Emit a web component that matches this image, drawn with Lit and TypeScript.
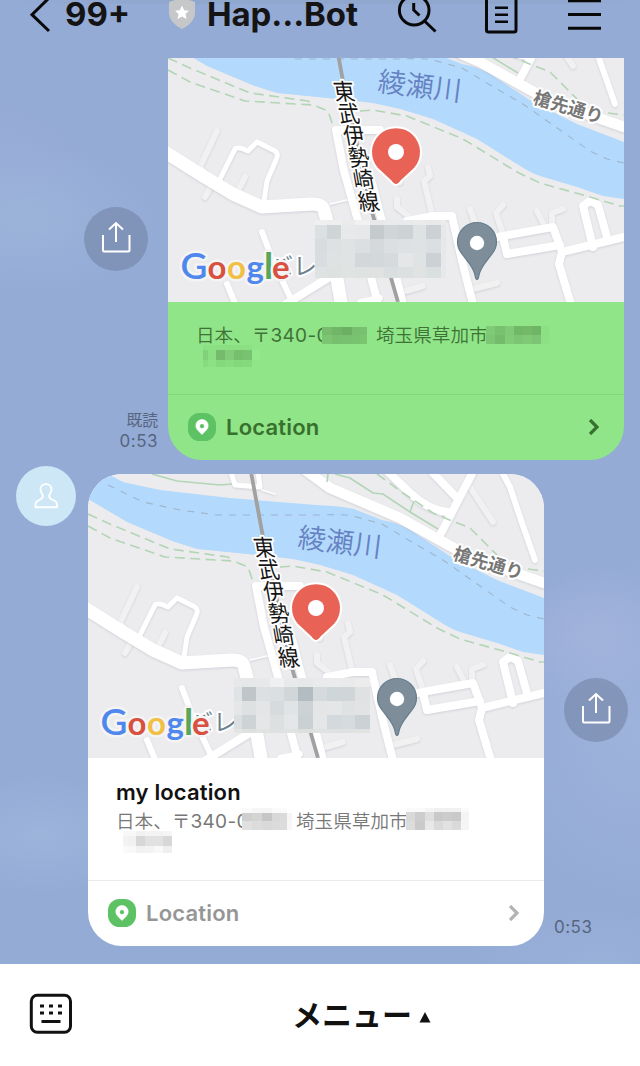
import { LitElement, html, svg, css } from "lit";
import { customElement, property } from "lit/decorators.js";

interface Mosaic {
  xs: number[];
  ys: number[];
  rows: string[][];
}

/** Draws a grid of flat colour cells; an empty colour leaves the cell open. */
const cells = (m: Mosaic) =>
  m.rows.flatMap((row, r) =>
    row.map((c, i) =>
      c
        ? svg`<rect x=${m.xs[i]} y=${m.ys[r]} width=${m.xs[i + 1] - m.xs[i]} height=${m.ys[r + 1] - m.ys[r]} fill=${c} shape-rendering="crispEdges"></rect>`
        : null
    )
  );

const mapMosaicA: Mosaic = {
  xs: [147, 159, 173, 187, 202, 216, 230, 245, 258, 273, 278],
  ys: [202, 207, 221, 235, 249, 260],
  rows: [
    ["#f0f0f1", "#eeeeef", "#ebebec", "#f1f1f1", "#e8e8ea", "#e9eaeb", "#e9eaeb", "#ebebec", "#e8e9ea", "#ebebec"],
    ["#dce0e2", "#cfd4d7", "#e8e9ea", "#e6e8e9", "#c5cacd", "#d0d5d8", "#cdd2d5", "#dfe2e3", "#cbd1d4", "#e7e8ea"],
    ["#d8dcdf", "#dde1e3", "#dfe3e4", "#dbdfe1", "#d5d9db", "#dcdfe1", "#dde1e3", "#dfe2e3", "#dbdfe1", "#e7e8ea"],
    ["#d9dddf", "#dfe2e3", "#e0e3e4", "#d3d7da", "#d3d8db", "#d6dadc", "#e5e6e8", "#dfe3e4", "#cbd1d4", "#e7e8ea"],
    ["#dee2e2", "#dde1e0", "#dfe3e2", "#dee2e0", "#dfe2e1", "#d9dede", "#dce0e0", "#e0e3e2", "#dae0df", "#e7e8ea"],
  ],
};

const mapMosaicB: Mosaic = {
  xs: [146, 154, 168, 182, 196, 210, 225, 239, 254, 267, 282],
  ys: [204, 213, 227, 241, 255, 259],
  rows: [
    ["#e7e8e9", "#e6e7e8", "#e7e8e9", "#eff0f1", "#e8e9ea", "#e7e8e9", "#e9eaeb", "#ebebec", "#e9eaeb", "#ececed"],
    ["#e0e3e5", "#bec6ca", "#dce0e2", "#dbdfe2", "#d1d6d9", "#b3bcc1", "#d5dadd", "#cfd6d9", "#d0d6d8", "#dfe1e3"],
    ["#e5e6e8", "#dee1e2", "#e3e5e6", "#d6dcde", "#e1e4e5", "#cdd3d4", "#e3e5e6", "#e4e6e7", "#dee2e3", "#e1e3e5"],
    ["#dcdfe2", "#ccd4d5", "#e4e6e7", "#dce0e1", "#e4e6e7", "#cad1d3", "#e4e6e7", "#d3d9dc", "#d6dbde", "#cbd2d5"],
    ["#e4e6e6", "#dee1e0", "#e1e3e2", "#dee1e0", "#e0e3e2", "#dbdfde", "#dfe2e1", "#e0e2e2", "#dfe2e1", "#e1e3e3"],
  ],
};

@customElement("street-map")
class StreetMap extends LitElement {
  @property({ type: Boolean }) short = false;

  static styles = css`
    :host { display: block; }
    svg { display: block; }
    .ground { fill: #ececee; }
    .water { fill: #b3d9fc; }
    .road { fill: none; stroke: #fff; stroke-linejoin: round; stroke-linecap: round; }
    .lane { fill: none; stroke: #f1f1f1; stroke-width: 6; stroke-linejoin: round; stroke-linecap: round; }
    .roads { filter: drop-shadow(0 1px 1px rgba(170, 172, 190, 0.42)); }
    .w5 { stroke-width: 5; }
    .w6 { stroke-width: 6; }
    .w8 { stroke-width: 8; }
    .w10 { stroke-width: 10.5; }
    .w13 { stroke-width: 13; }
    .thin { stroke-width: 1.6; }
    .green { fill: none; stroke: #b2d5b6; stroke-width: 1.6; }
    .dash { stroke-dasharray: 10 5.5; }
    .border { fill: none; stroke: #9fb6cb; stroke-width: 1.1; stroke-dasharray: 7 7; }
    .rail { fill: none; stroke: #a1a1a1; stroke-width: 3.8; }
    text { font-family: "Noto Sans CJK JP", sans-serif; }
    .river-name { font-size: 28px; font-weight: 350; fill: #6582c2; }
    .street-name { font-size: 18px; font-weight: 600; fill: #777; }
    .rail-name { font-size: 24px; font-weight: 400; fill: #151515; }
    .halo { paint-order: stroke; stroke: #fff; stroke-width: 4px; stroke-linejoin: round; }
    .place { font-size: 24px; fill: #6b828e; }
    .brand { font-family: Lato, sans-serif; font-size: 33px; font-weight: 700; paint-order: stroke; stroke: #f4f4f5; stroke-width: 5px; stroke-linejoin: round; }
    .tall { font-size: 37px; }
    .cap { font-weight: 600; }
    .b { fill: #5087ec; }
    .r { fill: #d85140; }
    .y { fill: #f1bf42; }
    .g { fill: #58a55c; }
  `;

  render() {
    const top = this.short ? 40 : 0;
    const rail = [..."東武伊勢崎線"];
    return html`<svg width="456" height=${284 - top} viewBox="0 ${top} 456 ${284 - top}">
      <rect class="ground" width="456" height="284"></rect>
      <path class="water" d="M0 -8L20 0L35 8L72 16L142 24L228 31Q254 32 266 35L294 46Q310 49 322 56L365 84L409 106L456 124V181L435 178L409 169L372 158Q365 156 357 151L309 121L265 101L232 91L205 85L159 80L109 75L84 67L39 48L0 25Z"></path>
      <path class="border" d="M20 11L55 28L92 36L129 41H232Q256 40 265 42L294 50L322 67L355 86L409 124L422 133L439 141L456 145"></path>
      <g class="roads">
        <path class="lane" d="M49 113L32 149L44 166L37 179M77 159L70 173M260 149L262 158L256 163L264 196M229 181V189L242 199M302 191L308 208M335 187L328 195L334 213M369 193L377 209M395 191L384 195V209M305 271L329 265M234 274L255 268M382 13L405 48M230 152Q224 160 232 164"></path>
      </g>
      <g class="roads">
        <path class="road w13" d="M-6 132L35 158L65 176L94 189L144 186Q154 186 156 192L160 208L174 290"></path>
        <path class="road w5" d="M52 161L67 131Q70 128 80 133L89 124L107 133Q111 136 108 142L99 163L96 183"></path>
        <path class="road w8" d="M168 112L176 153L190 203M202 255L211 290M168 112H212M204 165L217 215L236 290"></path>
        <path class="road w6" d="M94 214L105 243L122 279M59 266L69 290M192 284L212 280"></path>
        <path class="road w8" d="M118 286L165 257M239 203L265 198H284L294 243L306 290"></path>
        <path class="road w8" d="M329 219L385 209L394 234L456 219M335 219L339 236L392 227M394 234L391 246L404 290"></path>
        <path class="road w8" d="M425 229L415 188L422 183L430 187L440 223"></path>
        <path class="road w10" d="M216 -5L242 14L312 44L355 68L382 83L456 109"></path>
        <path class="road w8" d="M350 65L386 -4M345 -1L369 24M296 -6L322 19Q340 36 359 38"></path>
        <path class="road w6" d="M415 0L422 13L434 49L447 86"></path>
        <path class="road w5" d="M143 -2L147 11L172 13L170 -2"></path>
        <path class="road thin" d="M162 186L179 182M174 16L187 20"></path>
      </g>
      <path class="green" d="M64 0L89 7L132 11L144 10M240 0L239 8M247 0L262 4L285 19L295 20L322 38L350 55M326 27L322 38"></path>
      <path class="green dash" d="M0 40L22 50L82 75L140 83L146 87M0 52L22 64L77 83L145 87L160 93L165 108M192 93L205 92L239 98L295 121L349 154L372 165L422 179L452 188H456M289 0L315 19L345 39L364 47L382 54L399 71L412 84M440 95L456 97"></path>
      <path class="rail" d="M163 -2L175 63L204 194L230 284"></path>
      <text class="river-name" transform="translate(209 73) rotate(7)">綾瀬川</text>
      <text class="street-name halo" transform="translate(364 85) rotate(16.7)">槍先通り</text>
      ${rail.map((c, i) => svg`<text class="rail-name halo" text-anchor="middle" transform="translate(${177.5 + i * 4.9} ${81.5 + i * 22}) skewX(10) scale(.88 .96)">${c}</text>`)}
      <text class="place halo" x="101" y="257">バレ</text>
      ${cells(this.short ? mapMosaicA : mapMosaicB)}
      <path d="M228 166Q226 166 223 162L210 150A24 24 0 1 1 246 150L233 162Q230 166 228 166Z" fill="#e96256" stroke="#fff" stroke-width="4" paint-order="stroke"></path>
      <circle cx="228" cy="134" r="8" fill="#fff"></circle>
      <path d="M309 261.5Q307.500 261.500 307 257C305 248 300 244 294 236C290 231 289.500 228 289.500 224A19.500 19.500 0 0 1 328.500 224C328.500 228 328 231 324 236C318 244 313 248 311 257Q310.500 261.500 309 261.500Z" fill="#7d8e9a" stroke="#667d8b" stroke-width="1.2"></path>
      <circle cx="309" cy="225" r="7.200" fill="#fff"></circle>
      <text class="brand" y="260.500"><tspan class="b tall cap" x="12.500">G</tspan><tspan class="r" x="39.500">o</tspan><tspan class="y" x="59">o</tspan><tspan class="b" x="78.500">g</tspan><tspan class="g tall" x="96">l</tspan><tspan class="r" x="104">e</tspan></text>
    </svg>`;
  }
}

@customElement("location-card")
class LocationCard extends LitElement {
  @property({ type: Boolean, reflect: true }) sent = false;

  static styles = css`
    :host {
      display: block; width: 456px; overflow: hidden; border-radius: 34px;
      background: #fff; color: #777; --rule: #ebebeb; --label: #969696; --arrow: #b4b4b4;
    }
    :host([sent]) {
      border-radius: 0 0 34px 34px; background: #90e588; color: #3f7236;
      --rule: #82d67a; --label: #38702d; --arrow: #38702d;
    }
    .body { box-sizing: border-box; height: 122px; padding: 20px 28px 0; }
    :host([sent]) .body { height: 92px; padding-top: 20px; }
    .title {
      height: 30px; color: #111;
      font: 600 22px/28px Inter, sans-serif; letter-spacing: 0.15px;
    }
    .line { display: flex; height: 26px; align-items: center; white-space: pre; }
    .jp { font: 350 18.6px/26px "Noto Sans CJK JP", sans-serif; }
    .city { margin-top: -2px; width: 110px; }
    .num { font: 400 19px/26px Inter, sans-serif; letter-spacing: 0.35px; }
    .lead { width: 126px; overflow: hidden; flex: none; }
    .hidden { flex: none; display: block; }
    .tail { margin-top: -3px; }
    .foot {
      display: flex; align-items: center; gap: 10px; height: 66px; box-sizing: border-box;
      padding: 0 25px 1px 20px; border-top: 1px solid var(--rule);
    }
    .label { flex: 1; color: var(--label); font: 600 22px/28px Inter, sans-serif; letter-spacing: 0.2px; }
    .arrow { fill: none; stroke: var(--arrow); stroke-width: 3.3; }
  `;

  render() {
    const s = this.sent;
    const zip: Mosaic = {
      xs: [0, 10, 20, 30, 38, 45, 50],
      ys: [0, 5, 13, 22, 26],
      rows: s
        ? [
            ["", "", "", "", "", ""],
            ["#77bd6d", "#70b666", "#6bb062", "#78c06f", "#79c070", ""],
            ["#7cc573", "#78bf70", "#78c170", "#79c270", "#7bc571", ""],
            ["", "", "", "", "", ""],
          ]
        : [
            ["#fafafa", "#f6f6f6", "#f5f5f5", "#fafafa", "#fafafa", ""],
            ["#cfcfcf", "#d4d4d4", "#c6c6c6", "#d8d8d8", "#dadada", "#f5f5f5"],
            ["#e0e0e0", "#dcdcdc", "#d9d9d9", "#dbdbdb", "#dcdcdc", "#f7f7f7"],
            ["", "", "", "", "", ""],
          ],
    };
    const street: Mosaic = {
      xs: [0, 9, 19, 28, 37, 46, 55, 63],
      ys: [0, 4, 13, 22, 26],
      rows: s
        ? [
            ["", "", "", "", "", "", ""],
            ["#7fca76", "#78c26f", "#80ca77", "#70b766", "#73b969", "#70b567", "#8be082"],
            ["#7dc774", "#74bc6b", "#82cc79", "#7cc573", "#80ca76", "#7dc574", "#8de185"],
            ["", "", "", "", "", "", ""],
          ]
        : [
            ["#fafafa", "#fafafa", "#f5f5f5", "#f0f0f0", "#f0f0f0", "#f1f1f1", "#fafafa"],
            ["#d9d9d9", "#cdcdcd", "#dfdfdf", "#c9c9c9", "#cccccc", "#c9c9c9", "#f4f4f4"],
            ["#dcdcdc", "#cacaca", "#e8e8e8", "#dadada", "#e2e2e2", "#dadada", "#f5f5f5"],
            ["", "", "", "", "", "", ""],
          ],
    };
    const second: Mosaic = {
      xs: [7, 12, 20, 29, 38, 47, 56, 64],
      ys: [0, 5, 15, 22],
      rows: s
        ? [
            ["#8be083", "#8be083", "#8bde82", "#8bde82", "#8cdf83", "#8cdf83", ""],
            ["#82d079", "#8bdf82", "#75bb6c", "#83cd7a", "#76c06d", "#78c370", "#91e98a"],
            ["#88dc7f", "#8ce184", "#85d97d", "#88dc80", "#84d77b", "#86da7e", ""],
          ]
        : [
            ["#f8f8f8", "#f8f8f8", "#f1f1f1", "#f4f4f4", "#f3f3f3", "#f5f5f5", ""],
            ["#f3f3f3", "#f1f1f1", "#d7d7d7", "#e1e1e1", "#e1e1e1", "#d7d7d7", ""],
            ["#fafafa", "#f8f8f8", "#f1f1f1", "#f3f3f3", "#f8f8f8", "#efefef", ""],
          ],
    };
    return html`
      <street-map ?short=${s}></street-map>
      <div class="body">
        ${s ? null : html`<div class="title">my location</div>`}
        <div class="line">
          <span class="lead"><span class="jp">日本、〒</span><span class="num">340-0</span></span>
          <svg class="hidden" width="54" height="26">${cells(zip)}</svg>
          <span class="jp city">埼玉県草加市</span>
          <svg class="hidden" width="63" height="26">${cells(street)}</svg>
        </div>
        <svg class="hidden tail" width="70" height="24">${cells(second)}</svg>
      </div>
      <div class="foot">
        <svg width="28" height="28" viewBox="0 0 28 28">
          <rect width="28" height="28" rx="11.500" fill="#5dc263"></rect>
          <path d="M14 21.500L9.800 17.200A6.200 6.200 0 1 1 18.200 17.200Z" fill="#fff" stroke="#fff" stroke-width=".6" stroke-linejoin="round"></path>
          <circle cx="14" cy="13.200" r="2.100" fill="#5dc263"></circle>
        </svg>
        <span class="label">Location</span>
        <svg class="arrow" width="10" height="16" viewBox="0 0 10 16"><path d="M1 1L8 8L1 15"></path></svg>
      </div>
    `;
  }
}

@customElement("app-root")
class AppRoot extends LitElement {
  static styles = css`
    :host {
      display: flex; flex-direction: column; height: 1066px; overflow: hidden;
      font-family: Inter, "Noto Sans CJK JP", sans-serif;
      background:
        radial-gradient(ellipse 130px 75px at 30px 220px, rgba(157, 181, 218, 0.8), transparent),
        radial-gradient(ellipse 100px 90px at 0 180px, rgba(157, 175, 216, 0.6), transparent),
        radial-gradient(ellipse 90px 70px at 595px 635px, rgba(167, 181, 220, 0.7), transparent),
        radial-gradient(ellipse 150px 180px at 640px 730px, rgba(160, 181, 220, 0.8), transparent),
        radial-gradient(ellipse 110px 60px at 40px 835px, rgba(160, 183, 220, 0.7), transparent),
        radial-gradient(ellipse 130px 50px at 600px 960px, rgba(155, 180, 218, 0.7), transparent),
        #94abd6;
    }
    .head {
      display: flex; align-items: flex-start; box-sizing: border-box; height: 58px;
      padding-left: 28px; color: #141414; flex: none;
      background: linear-gradient(90deg, transparent, rgba(140, 163, 200, 0.6) 25%, rgba(140, 163, 200, 0.6) 85%, transparent) 0 0 / 100% 4px no-repeat;
    }
    .head svg { flex: none; display: block; }
    .head-text { font-size: 33px; line-height: 29px; font-weight: 700; white-space: nowrap; }
    .count { width: 116px; padding-left: 13px; box-sizing: border-box; }
    .name { width: 189px; padding-left: 11px; box-sizing: border-box; letter-spacing: -0.1px; }
    .stroke { fill: none; stroke: #080808; stroke-width: 3; stroke-linecap: round; stroke-linejoin: round; }
    .row { display: flex; flex: none; }
    .incoming { margin-top: 14px; }
    .side { display: flex; flex-direction: column; box-sizing: border-box; }
    .before { width: 168px; padding: 149px 10px 8px 0; align-items: flex-end; }
    .before .share { margin-right: 10px; }
    .after { width: 96px; padding: 204px 0 8px 10px; align-items: flex-start; }
    .after .share { margin-left: 10px; }
    .share { width: 64px; height: 64px; border-radius: 50%; background: rgba(112, 128, 160, 0.55); }
    .share svg { display: block; }
    .meta { margin-top: auto; color: #57657f; font-size: 17px; line-height: 21px; letter-spacing: 0.5px; text-align: right; }
    .read { font: 400 15.8px/21px "Noto Sans CJK JP", sans-serif; letter-spacing: 0; padding-bottom: 1px; }
    .who { width: 88px; box-sizing: border-box; padding-left: 16px; margin-top: -8px; }
    .avatar { display: block; }
    .bar {
      display: flex; align-items: center; margin-top: 18px; height: 102px; flex: none;
      box-sizing: border-box; padding: 0 0 2px 29px; background: #fff; color: #111;
    }
    .menu {
      flex: 1; display: flex; align-items: center; padding: 0 0 2px 219px; gap: 7px;
      font: 600 30px/40px "Noto Sans CJK JP", sans-serif;
    }
    .tri { margin-top: 9px; }
  `;

  private share() {
    return html`<div class="share">
      <svg width="64" height="64" viewBox="0 0 64 64" fill="none" stroke="#fff" stroke-width="2">
        <path d="M19 28V43.500Q19 44.500 20 44.500H44.500Q45.500 44.500 45.500 43.500V28M32 35V16.500M25 22.500L32 16L39 22.500"></path>
      </svg>
    </div>`;
  }

  render() {
    return html`
      <header class="head">
        <svg class="stroke" width="24" height="36" viewBox="28 0 24 36"><path d="M51 -4L32 14.700L49 31" stroke-linecap="butt" stroke-linejoin="miter"></path></svg>
        <span class="head-text count">99+</span>
        <svg width="28" height="32" viewBox="168 0 28 32">
          <path d="M169 2Q176 0 182 -3Q188 0 195 2V14Q194 23 182 29Q170 23 169 14Z" fill="#c6c7c9"></path>
          <path d="M182 5.500L184.200 10.200L189 10.700L185.500 14L186.500 19L182 16.500L177.500 19L178.500 14L175 10.700L179.800 10.200Z" fill="#fff"></path>
        </svg>
        <span class="head-text name">Hap...Bot</span>
        <svg class="stroke" width="255" height="36" viewBox="385 0 255 36">
          <circle cx="414.200" cy="10.200" r="14.800"></circle>
          <path d="M424.500 21L435.500 31.500M413.700 3V10L419.500 15.500" stroke-linecap="butt"></path>
          <path d="M486.500 -4V30Q486.500 32 488.500 32H514Q516 32 516 30V-4"></path>
          <path d="M495 7.700H508M495 14.700H508M495 21.700H508" stroke-linecap="butt" stroke-width="2.600"></path>
          <path d="M568 .8H601M568 14.500H601M568 28.200H601" stroke-linecap="butt"></path>
        </svg>
      </header>
      <section class="row">
        <div class="side before">
          ${this.share()}
          <div class="meta"><div class="read">既読</div>0:53</div>
        </div>
        <location-card sent></location-card>
      </section>
      <section class="row incoming">
        <div class="who">
          <svg class="avatar" width="60" height="60" viewBox="0 0 60 60">
            <circle cx="30" cy="30" r="30" fill="#cde7f6"></circle>
            <path d="M26.500 28.500Q24.500 26 24.500 23.500C24.500 16.300 35.500 16.300 35.500 23.500Q35.500 26 33.500 28.500Q32.500 31.500 35 33L39 35Q41 36 41 38.500V41.300H19.500V38.500Q19.500 36 21.500 35L25 33Q27.500 31.500 26.500 28.500Z" fill="none" stroke="#fff" stroke-width="1.900" stroke-linejoin="round"></path>
          </svg>
        </div>
        <location-card></location-card>
        <div class="side after">
          ${this.share()}
          <div class="meta">0:53</div>
        </div>
      </section>
      <footer class="bar">
        <svg width="44" height="42" viewBox="0 0 44 42" fill="none" stroke="#111" stroke-width="3">
          <rect x="2.300" y="2.300" width="39.200" height="37" rx="6"></rect>
          <path d="M11 13H15M20 13H24M29 13H33M11 20H15M20 20H24M29 20H33M12.500 28.500H31.500"></path>
        </svg>
        <div class="menu">
          <span>メニュー</span>
          <svg class="tri" width="12" height="11" viewBox="0 0 12 11"><path d="M6 0L11.500 10.500H.5Z" fill="#111"></path></svg>
        </div>
      </footer>
    `;
  }
}
